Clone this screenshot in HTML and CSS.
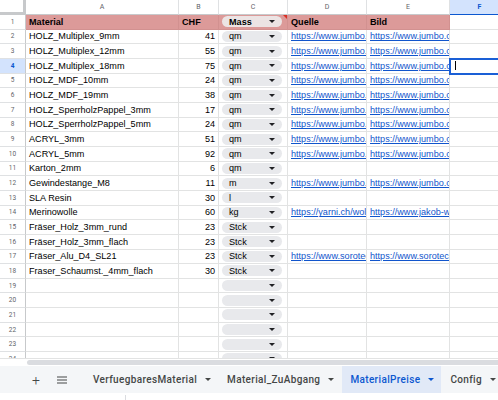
FILE: index.html
```html
<!DOCTYPE html>
<html>
<head>
<meta charset="utf-8">
<link rel="stylesheet" href="styles.css">
</head>
<body>
<div class="sheet">
  <div class="colhead">
    <div class="corner"></div>
    <div class="ch">A</div>
    <div class="ch">B</div>
    <div class="ch">C</div>
    <div class="ch">D</div>
    <div class="ch">E</div>
    <div class="ch ch-sel">F</div>
  </div>
  <div class="body">
    <div class="row hdr">
      <div class="rh">1</div>
      <div class="cell b">Material</div>
      <div class="cell b">CHF</div>
      <div class="cell cc note"><span class="chip chip-h">Mass<i class="caret"></i></span></div>
      <div class="cell b">Quelle</div>
      <div class="cell b">Bild</div>
      <div class="cell plain"></div>
    </div>
    <div class="row"><div class="rh">2</div><div class="cell">HOLZ_Multiplex_9mm</div><div class="cell num">41</div><div class="cell cc"><span class="chip">qm<i class="caret"></i></span></div><div class="cell"><a class="lnk">https://www.jumbo.ch/de/holz</a></div><div class="cell"><a class="lnk">https://www.jumbo.ch/de/holz</a></div><div class="cell"></div></div>
    <div class="row"><div class="rh">3</div><div class="cell">HOLZ_Multiplex_12mm</div><div class="cell num">55</div><div class="cell cc"><span class="chip">qm<i class="caret"></i></span></div><div class="cell"><a class="lnk">https://www.jumbo.ch/de/holz</a></div><div class="cell"><a class="lnk">https://www.jumbo.ch/de/holz</a></div><div class="cell"></div></div>
    <div class="row"><div class="rh rh-sel">4</div><div class="cell">HOLZ_Multiplex_18mm</div><div class="cell num">75</div><div class="cell cc"><span class="chip">qm<i class="caret"></i></span></div><div class="cell"><a class="lnk">https://www.jumbo.ch/de/holz</a></div><div class="cell"><a class="lnk">https://www.jumbo.ch/de/holz</a></div><div class="cell sel"><span class="cursor"></span></div></div>
    <div class="row"><div class="rh">5</div><div class="cell">HOLZ_MDF_10mm</div><div class="cell num">24</div><div class="cell cc"><span class="chip">qm<i class="caret"></i></span></div><div class="cell"><a class="lnk">https://www.jumbo.ch/de/holz</a></div><div class="cell"><a class="lnk">https://www.jumbo.ch/de/holz</a></div><div class="cell"></div></div>
    <div class="row"><div class="rh">6</div><div class="cell">HOLZ_MDF_19mm</div><div class="cell num">38</div><div class="cell cc"><span class="chip">qm<i class="caret"></i></span></div><div class="cell"><a class="lnk">https://www.jumbo.ch/de/holz</a></div><div class="cell"><a class="lnk">https://www.jumbo.ch/de/holz</a></div><div class="cell"></div></div>
    <div class="row"><div class="rh">7</div><div class="cell">HOLZ_SperrholzPappel_3mm</div><div class="cell num">17</div><div class="cell cc"><span class="chip">qm<i class="caret"></i></span></div><div class="cell"><a class="lnk">https://www.jumbo.ch/de/holz</a></div><div class="cell"><a class="lnk">https://www.jumbo.ch/de/holz</a></div><div class="cell"></div></div>
    <div class="row"><div class="rh">8</div><div class="cell">HOLZ_SperrholzPappel_5mm</div><div class="cell num">24</div><div class="cell cc"><span class="chip">qm<i class="caret"></i></span></div><div class="cell"><a class="lnk">https://www.jumbo.ch/de/holz</a></div><div class="cell"><a class="lnk">https://www.jumbo.ch/de/holz</a></div><div class="cell"></div></div>
    <div class="row"><div class="rh">9</div><div class="cell">ACRYL_3mm</div><div class="cell num">51</div><div class="cell cc"><span class="chip">qm<i class="caret"></i></span></div><div class="cell"><a class="lnk">https://www.jumbo.ch/de/acryl</a></div><div class="cell"><a class="lnk">https://www.jumbo.ch/de/acryl</a></div><div class="cell"></div></div>
    <div class="row"><div class="rh">10</div><div class="cell">ACRYL_5mm</div><div class="cell num">92</div><div class="cell cc"><span class="chip">qm<i class="caret"></i></span></div><div class="cell"><a class="lnk">https://www.jumbo.ch/de/acryl</a></div><div class="cell"><a class="lnk">https://www.jumbo.ch/de/acryl</a></div><div class="cell"></div></div>
    <div class="row"><div class="rh">11</div><div class="cell">Karton_2mm</div><div class="cell num">6</div><div class="cell cc"><span class="chip">qm<i class="caret"></i></span></div><div class="cell"></div><div class="cell"></div><div class="cell"></div></div>
    <div class="row"><div class="rh">12</div><div class="cell">Gewindestange_M8</div><div class="cell num">11</div><div class="cell cc"><span class="chip">m<i class="caret"></i></span></div><div class="cell"><a class="lnk">https://www.jumbo.ch/de/gewinde</a></div><div class="cell"><a class="lnk">https://www.jumbo.ch/de/gewinde</a></div><div class="cell"></div></div>
    <div class="row"><div class="rh">13</div><div class="cell">SLA Resin</div><div class="cell num">30</div><div class="cell cc"><span class="chip">l<i class="caret"></i></span></div><div class="cell"></div><div class="cell"></div><div class="cell"></div></div>
    <div class="row"><div class="rh">14</div><div class="cell">Merinowolle</div><div class="cell num">60</div><div class="cell cc"><span class="chip">kg<i class="caret"></i></span></div><div class="cell"><a class="lnk">https://yarni.ch/wolle</a></div><div class="cell"><a class="lnk">https://www.jakob-wolle.ch</a></div><div class="cell"></div></div>
    <div class="row"><div class="rh">15</div><div class="cell">Fräser_Holz_3mm_rund</div><div class="cell num">23</div><div class="cell cc"><span class="chip">Stck<i class="caret"></i></span></div><div class="cell"></div><div class="cell"></div><div class="cell"></div></div>
    <div class="row"><div class="rh">16</div><div class="cell">Fräser_Holz_3mm_flach</div><div class="cell num">23</div><div class="cell cc"><span class="chip">Stck<i class="caret"></i></span></div><div class="cell"></div><div class="cell"></div><div class="cell"></div></div>
    <div class="row"><div class="rh">17</div><div class="cell">Fräser_Alu_D4_SL21</div><div class="cell num">23</div><div class="cell cc"><span class="chip">Stck<i class="caret"></i></span></div><div class="cell"><a class="lnk">https://www.sorotec.de/shop</a></div><div class="cell"><a class="lnk">https://www.sorotec.de/shop</a></div><div class="cell"></div></div>
    <div class="row"><div class="rh">18</div><div class="cell">Fraser_Schaumst._4mm_flach</div><div class="cell num">30</div><div class="cell cc"><span class="chip">Stck<i class="caret"></i></span></div><div class="cell"></div><div class="cell"></div><div class="cell"></div></div>
    <div class="row"><div class="rh">19</div><div class="cell"></div><div class="cell"></div><div class="cell cc"><span class="chip"><i class="caret"></i></span></div><div class="cell"></div><div class="cell"></div><div class="cell"></div></div>
    <div class="row"><div class="rh">20</div><div class="cell"></div><div class="cell"></div><div class="cell cc"><span class="chip"><i class="caret"></i></span></div><div class="cell"></div><div class="cell"></div><div class="cell"></div></div>
    <div class="row"><div class="rh">21</div><div class="cell"></div><div class="cell"></div><div class="cell cc"><span class="chip"><i class="caret"></i></span></div><div class="cell"></div><div class="cell"></div><div class="cell"></div></div>
    <div class="row"><div class="rh">22</div><div class="cell"></div><div class="cell"></div><div class="cell cc"><span class="chip"><i class="caret"></i></span></div><div class="cell"></div><div class="cell"></div><div class="cell"></div></div>
    <div class="row"><div class="rh">23</div><div class="cell"></div><div class="cell"></div><div class="cell cc"><span class="chip"><i class="caret"></i></span></div><div class="cell"></div><div class="cell"></div><div class="cell"></div></div>
    <div class="row"><div class="rh">24</div><div class="cell"></div><div class="cell"></div><div class="cell cc"><span class="chip"><i class="caret"></i></span></div><div class="cell"></div><div class="cell"></div><div class="cell"></div></div>
  </div>
  <div class="hscroll"><div class="thumb"></div></div>
  <div class="tabbar">
    <span class="tb-btn plus">+</span>
    <span class="tb-btn menu">
      <svg width="10" height="8" viewBox="0 0 10 8"><path d="M0 1h10M0 4h10M0 7h10" stroke="#444746" stroke-width="1.2"/></svg>
    </span>
    <div class="tabs">
      <div class="tab">VerfuegbaresMaterial<i class="caret"></i></div>
      <div class="tab">Material_ZuAbgang<i class="caret"></i></div>
      <div class="tab active">MaterialPreise<i class="caret"></i></div>
      <div class="tab">Config<i class="caret"></i></div>
    </div>
  </div>
  <div class="status"><div class="status-l"></div></div>
</div>
</body>
</html>
```
FILE: styles.css
```css
html, body {
  margin: 0;
  padding: 0;
  background: #fff;
}
body {
  width: 498px;
  height: 400px;
  overflow: hidden;
  font-family: "Liberation Sans", Arial, sans-serif;
}
.sheet {
  width: 498px;
  height: 400px;
  display: flex;
  flex-direction: column;
  overflow: hidden;
}
.colhead, .row {
  display: grid;
  grid-template-columns: 26px 153px 40px 69px 79px 83px 60px;
}
.colhead {
  height: 15px;
  flex: none;
}
.corner {
  border-right: 3px solid #c7c9cb;
  border-bottom: 3px solid #c7c9cb;
  box-sizing: border-box;
}
.ch {
  box-sizing: border-box;
  border-right: 1px solid #dfe1e3;
  border-bottom: 1px solid #c7c9cb;
  font-family: "Roboto", sans-serif;
  font-size: 7px;
  color: #5f6368;
  display: flex;
  align-items: center;
  justify-content: center;
}
.ch-sel {
  background: #d3e3fd;
  color: #0b57d0;
  font-weight: 700;
  border-bottom: 1px solid #0b57d0;
}
.body {
  height: 343px;
  flex: none;
  overflow: hidden;
}
.row {
  height: 14.67px;
}
.rh {
  box-sizing: border-box;
  border-right: 1px solid #c7c9cb;
  border-bottom: 1px solid #dfe1e3;
  font-family: "Roboto", sans-serif;
  font-size: 6.5px;
  color: #5f6368;
  display: flex;
  align-items: center;
  justify-content: center;
}
.rh-sel {
  background: #d3e3fd;
  color: #0b57d0;
  font-weight: 700;
}
.cell {
  box-sizing: border-box;
  border-right: 1px solid #e2e3e3;
  border-bottom: 1px solid #e2e3e3;
  font-size: 9.1px;
  color: #000;
  padding: 0 2px 0 3px;
  display: flex;
  align-items: center;
  white-space: nowrap;
  overflow: hidden;
  min-width: 0;
}
.num {
  justify-content: flex-end;
  padding-right: 3px;
}
.b {
  font-weight: 700;
}
.hdr .cell {
  background: #dc9a99;
  border-right-color: #d29190;
  border-bottom-color: #d29190;
}
.hdr .cell.plain {
  background: #fff;
  border-right-color: #e2e3e3;
  border-bottom-color: #e2e3e3;
}
.cc {
  padding: 0 5px 0 3px;
  position: relative;
}
.note::after {
  content: "";
  position: absolute;
  top: 0;
  right: 0;
  border-top: 4px solid #d93025;
  border-left: 4px solid transparent;
}
.chip {
  flex: 1;
  height: 11px;
  border-radius: 6px;
  background: #e8e9ec;
  display: flex;
  align-items: center;
  justify-content: space-between;
  padding: 0 7px 0 7px;
  font-size: 9.1px;
  color: #000;
}
.chip-h {
  background: #ece4e4;
  font-weight: 700;
}
.caret {
  display: inline-block;
  width: 0;
  height: 0;
  border-left: 3px solid transparent;
  border-right: 3px solid transparent;
  border-top: 3px solid #202124;
  margin-left: auto;
}
.lnk {
  color: #1155cc;
  text-decoration: underline;
  font-size: 9.1px;
}
.sel {
  outline: 2px solid #1a5fd6;
  outline-offset: -1px;
  position: relative;
}
.cursor {
  display: block;
  width: 1px;
  height: 9px;
  background: #000;
  margin-left: 2px;
}
.hscroll {
  height: 8px;
  flex: none;
  background: #fff;
  padding: 1px 0 1px 27px;
  box-sizing: border-box;
  border-top: 1px solid #e2e3e3;
}
.thumb {
  height: 100%;
  background: #dadce0;
  border-radius: 3px 0 0 3px;
}
.tabbar {
  height: 27px;
  flex: none;
  background: #f4f6f8;
  display: flex;
  align-items: stretch;
  font-family: "Roboto", sans-serif;
  font-size: 10px;
  color: #444746;
}
.tb-btn {
  display: flex;
  align-items: center;
  justify-content: center;
}
.plus {
  width: 10px;
  margin-left: 32px;
  font-size: 14px;
  font-weight: 300;
}
.menu {
  width: 10px;
  margin-left: 17px;
}
.tabs {
  display: flex;
  margin-left: 18px;
  gap: 1px;
}
.tab {
  display: flex;
  align-items: center;
  padding: 0 7px 0 8px;
  letter-spacing: 0.35px;
  font-weight: 500;
}
.tab .caret {
  margin-left: 8px;
  border-top-color: #444746;
}
.tab.active {
  background: #e1e9f7;
  color: #0b57d0;
}
.tab.active .caret {
  border-top-color: #0b57d0;
}
.status {
  flex: 1;
  background: #fff;
  display: flex;
  padding-top: 2px;
}
.status-l {
  width: 125px;
  border-right: 1px solid #dadce0;
}
```
